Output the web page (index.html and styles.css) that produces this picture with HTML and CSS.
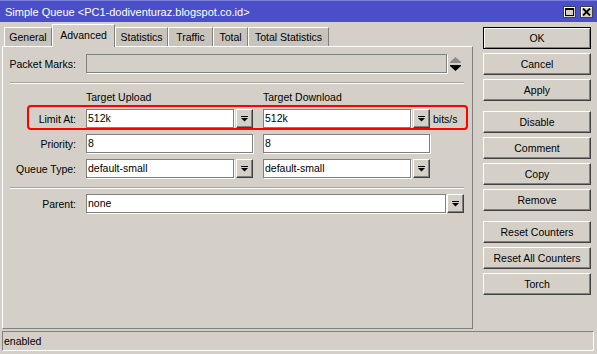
FILE: index.html
```html
<!DOCTYPE html>
<html>
<head>
<meta charset="utf-8">
<link rel="stylesheet" href="styles.css">
</head>
<body>
<div class="titlebar">
  <span class="title">Simple Queue &lt;PC1-dodiventuraz.blogspot.co.id&gt;</span>
  <div class="tb-btns">
    <div class="tb-btn"><svg width="9" height="8" viewBox="0 0 9 8"><rect x="0.5" y="0.5" width="8" height="7" fill="none" stroke="#000"/><rect x="0" y="0" width="9" height="2" fill="#000"/></svg></div>
    <div class="tb-btn"><svg width="9" height="8" viewBox="0 0 9 8"><path d="M1 0.5 L8 7.5 M8 0.5 L1 7.5" stroke="#000" stroke-width="1.8"/></svg></div>
  </div>
</div>
<div class="main">
  <div class="left">
    <div class="tabs">
      <div class="tab w-general">General</div>
      <div class="tab active w-advanced">Advanced</div>
      <div class="tab w-statistics">Statistics</div>
      <div class="tab w-traffic">Traffic</div>
      <div class="tab w-total">Total</div>
      <div class="tab w-totalstat">Total Statistics</div>
    </div>
    <div class="panel">
      <div class="row">
        <div class="lbl">Packet Marks:</div>
        <div class="field disabled w-pm"></div>
        <div class="spin"><svg width="11" height="14" viewBox="0 0 11 14"><polygon points="5.5,0 0,5 11,5" fill="#8a8a8a"/><rect x="0" y="5" width="11" height="1" fill="#8a8a8a"/><rect x="0" y="8" width="11" height="1" fill="#000"/><polygon points="0,9 11,9 5.5,14" fill="#000"/></svg></div>
      </div>
      <div class="sep"></div>
      <div class="hdr"><span class="hcol">Target Upload</span><span class="hcol">Target Download</span></div>
      <div class="row limit">
        <div class="lbl">Limit At:</div>
        <div class="col"><div class="field w-combo">512k</div><div class="dd"><svg width="7" height="6" viewBox="0 0 7 6"><rect x="0" y="0" width="7" height="1" fill="#000"/><polygon points="0,2 7,2 3.5,5.5" fill="#000"/></svg></div></div>
        <div class="col"><div class="field w-combo">512k</div><div class="dd"><svg width="7" height="6" viewBox="0 0 7 6"><rect x="0" y="0" width="7" height="1" fill="#000"/><polygon points="0,2 7,2 3.5,5.5" fill="#000"/></svg></div></div>
        <span class="unit">bits/s</span>
      </div>
      <div class="row gap6">
        <div class="lbl">Priority:</div>
        <div class="col"><div class="field w-full">8</div></div>
        <div class="col"><div class="field w-full">8</div></div>
      </div>
      <div class="row gap6">
        <div class="lbl">Queue Type:</div>
        <div class="col"><div class="field w-combo">default-small</div><div class="dd"><svg width="7" height="6" viewBox="0 0 7 6"><rect x="0" y="0" width="7" height="1" fill="#000"/><polygon points="0,2 7,2 3.5,5.5" fill="#000"/></svg></div></div>
        <div class="col"><div class="field w-combo">default-small</div><div class="dd"><svg width="7" height="6" viewBox="0 0 7 6"><rect x="0" y="0" width="7" height="1" fill="#000"/><polygon points="0,2 7,2 3.5,5.5" fill="#000"/></svg></div></div>
      </div>
      <div class="sep"></div>
      <div class="row gap5">
        <div class="lbl">Parent:</div>
        <div class="field w-parent">none</div>
        <div class="dd dd-tight"><svg width="7" height="6" viewBox="0 0 7 6"><rect x="0" y="0" width="7" height="1" fill="#000"/><polygon points="0,2 7,2 3.5,5.5" fill="#000"/></svg></div>
      </div>
    </div>
  </div>
  <div class="side">
    <div class="btn default">OK</div>
    <div class="btn">Cancel</div>
    <div class="btn">Apply</div>
    <div class="btn group">Disable</div>
    <div class="btn">Comment</div>
    <div class="btn">Copy</div>
    <div class="btn">Remove</div>
    <div class="btn group">Reset Counters</div>
    <div class="btn">Reset All Counters</div>
    <div class="btn">Torch</div>
  </div>
</div>
<div class="status">enabled</div>
</body>
</html>
```
FILE: styles.css
```css
* { box-sizing: border-box; }
html, body { margin: 0; padding: 0; }
body {
  width: 597px;
  height: 354px;
  overflow: hidden;
  background: #d4d0c8;
  font-family: "Liberation Sans", Arial, sans-serif;
  font-size: 10.5px;
  color: #000;
}
.titlebar {
  height: 22px;
  background: #4a4fc9;
  border-top: 1px solid #7b7fdc;
  color: #fff;
  font-size: 11px;
  display: flex;
  align-items: center;
  padding: 0 4px 0 5px;
}
.title { flex: 1; white-space: nowrap; }
.tb-btns { display: flex; gap: 4px; align-self: flex-start; margin-top: 5px; }
.tb-btn {
  width: 13px;
  height: 12px;
  background: #d4d0c8;
  border: 1px solid #404040;
  box-shadow: inset 1px 1px 0 #fff;
  display: flex;
  align-items: center;
  justify-content: center;
}
.main { display: flex; }
.left { margin-left: 2px; width: 471px; }
.tabs {
  height: 24px;
  display: flex;
  align-items: flex-end;
  padding-left: 2px;
  position: relative;
  z-index: 1;
}
.tab {
  height: 19px;
  line-height: 18px;
  text-align: center;
  white-space: nowrap;
  background: #c8c4bc;
  border-top: 1px solid #fff;
  border-left: 1px solid #fff;
  border-right: 1px solid #808080;
}
.tab.active {
  height: 23px;
  margin-bottom: -1px;
  line-height: 21px;
  background: #d4d0c8;
}
.w-general { width: 48px; }
.w-advanced { width: 63px; }
.w-statistics { width: 53px; }
.w-traffic { width: 45px; }
.w-total { width: 35px; }
.w-totalstat { width: 81px; }
.panel {
  height: 283px;
  border: 1px solid;
  border-color: #fff #808080 #808080 #fff;
  padding-top: 7px;
}
.row {
  display: flex;
  align-items: center;
  height: 19px;
  position: relative;
}
.gap6 { margin-top: 6px; }
.gap5 { margin-top: 5px; }
.limit { margin-top: 4px; }
.limit::after {
  content: "";
  position: absolute;
  left: 24px;
  right: 4px;
  top: -4px;
  bottom: -2px;
  border: 2px solid #f00;
  border-radius: 4px;
  pointer-events: none;
}
.lbl {
  width: 73px;
  margin-right: 10px;
  text-align: right;
  white-space: nowrap;
}
.field {
  height: 19px;
  background: #fff;
  border: 1px solid #808080;
  box-shadow: 1px 1px 0 #fff;
  padding-left: 1px;
  line-height: 17px;
  white-space: nowrap;
  overflow: hidden;
}
.field.disabled { background: #d4d0c8; }
.w-pm { width: 361px; }
.w-combo { width: 148px; }
.w-full { width: 167px; }
.w-parent { width: 360px; }
.col { display: flex; width: 167px; }
.col + .col { margin-left: 10px; }
.dd {
  width: 17px;
  height: 19px;
  margin-left: 2px;
  background: #d4d0c8;
  border: 1px solid;
  border-color: #fff #404040 #404040 #fff;
  box-shadow: inset -1px -1px 0 #808080;
  display: flex;
  align-items: center;
  justify-content: center;
}
.dd-tight { margin-left: 1px; }
.spin { margin-left: 3px; width: 11px; height: 14px; display: flex; }
.unit { margin-left: 3px; }
.sep {
  margin: 9px 8px 0 7px;
  border-top: 1px solid #a8a49c;
  border-bottom: 1px solid #fff;
}
.hdr {
  display: flex;
  height: 16px;
  line-height: 16px;
  margin-top: 5px;
  padding-left: 83px;
}
.hcol { width: 177px; white-space: nowrap; }
.side {
  margin-left: 10px;
  padding-top: 5px;
  width: 108px;
  display: flex;
  flex-direction: column;
}
.btn {
  height: 22px;
  margin-top: 4px;
  line-height: 20px;
  text-align: center;
  white-space: nowrap;
  background: #d4d0c8;
  border: 1px solid;
  border-color: #fff #404040 #404040 #fff;
  box-shadow: inset -1px -1px 0 #808080;
}
.btn.default {
  margin-top: 0;
  border-color: #000;
  box-shadow: inset 1px 1px 0 #fff, inset -1px -1px 0 #808080;
}
.btn.group { margin-top: 10px; }
.status {
  margin: 2px 0 0 2px;
  width: 592px;
  height: 20px;
  border: 1px solid;
  border-color: #808080 #fff #fff #808080;
  padding-left: 1px;
  line-height: 18px;
}
```
